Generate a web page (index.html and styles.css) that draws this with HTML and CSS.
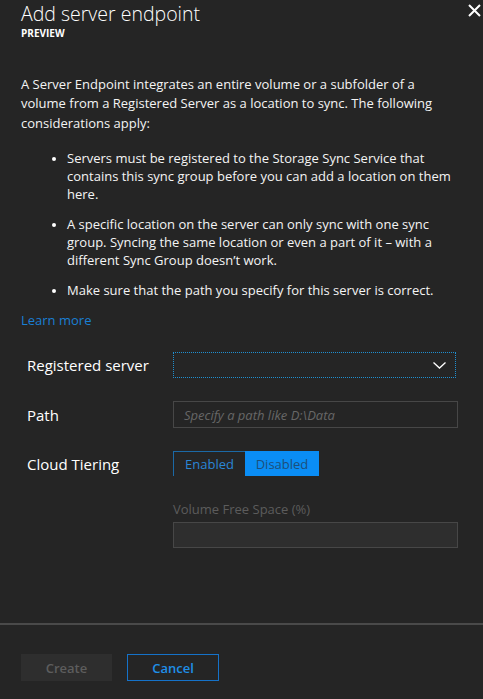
FILE: index.html
```html
<!DOCTYPE html>
<html lang="en">
<head>
<meta charset="utf-8">
<title>Add server endpoint</title>
<link rel="stylesheet" href="styles.css">
</head>
<body>
<div class="blade">
  <header class="blade-header">
    <div class="titles">
      <h1 class="title">Add server endpoint</h1>
      <div class="subtitle">PREVIEW</div>
    </div>
    <button class="close" aria-label="Close">
      <svg width="13" height="13" viewBox="0 0 13 13"><path d="M1 1L12 12M12 1L1 12" stroke="#fff" stroke-width="2" fill="none"/></svg>
    </button>
  </header>

  <main class="blade-body">
    <p class="intro">A Server Endpoint integrates an entire volume or a subfolder of a volume from a Registered Server as a location to sync. The following considerations apply:</p>
    <ul class="points">
      <li>Servers must be registered to the Storage Sync Service that contains this sync group before you can add a location on them here.</li>
      <li>A specific location on the server can only sync with one sync group. Syncing the same location or even a part of it – with a different Sync Group doesn’t work.</li>
      <li>Make sure that the path you specify for this server is correct.</li>
    </ul>
    <a class="learn" href="#">Learn more</a>

    <div class="form">
      <div class="row">
        <label class="label">Registered server</label>
        <div class="dropdown">
          <svg width="13" height="7" viewBox="0 0 13 7"><path d="M0.5 0.5L6.5 6L12.5 0.5" stroke="#fff" stroke-width="1.3" fill="none"/></svg>
        </div>
      </div>
      <div class="row">
        <label class="label">Path</label>
        <div class="input"><span class="placeholder">Specify a path like D:\Data</span></div>
      </div>
      <div class="row">
        <label class="label">Cloud Tiering</label>
        <div class="toggle">
          <span class="seg seg-off">Enabled</span>
          <span class="seg seg-on">Disabled</span>
        </div>
      </div>
      <div class="row row-sub">
        <div class="spacer"></div>
        <div class="field">
          <div class="sublabel">Volume Free Space (%)</div>
          <div class="input input-disabled"></div>
        </div>
      </div>
    </div>
  </main>

  <footer class="blade-footer">
    <button class="btn btn-create">Create</button>
    <button class="btn btn-cancel">Cancel</button>
  </footer>
</div>
</body>
</html>
```

FILE: styles.css
```css
* { box-sizing: border-box; }
html, body { margin: 0; padding: 0; }
body {
  background: #252525;
  color: #ffffff;
  font-family: "Open Sans", "Noto Sans", sans-serif;
}
.blade {
  height: 699px;
  display: flex;
  flex-direction: column;
  background: #252525;
}
.blade-header {
  display: flex;
  justify-content: space-between;
  align-items: flex-start;
  padding: 1.5px 2px 0 21px;
}
.title {
  margin: 0;
  font-size: 19.5px;
  font-weight: 300;
  line-height: 24px;
  color: #ffffff;
}
.subtitle {
  margin-top: 1px;
  font-size: 10px;
  font-weight: 700;
  line-height: 12px;
  color: #ffffff;
}
.close {
  background: none;
  border: 0;
  padding: 0;
  margin-top: 2.5px;
  width: 13px;
  height: 13px;
  display: flex;
}
.blade-body {
  flex: 1;
  padding: 0 21px;
}
.intro {
  margin: 36px 0 0;
  font-size: 13px;
  line-height: 19.5px;
  color: #f4f4f4;
}
.points {
  list-style: none;
  margin: 16px 0 0;
  padding: 0 0 0 31px;
  color: #f4f4f4;
}
.points li {
  display: flex;
  font-size: 13px;
  line-height: 18px;
  margin-bottom: 12px;
}
.points li::before {
  content: "";
  flex: none;
  width: 4px;
  height: 4px;
  border-radius: 50%;
  background: #ffffff;
  margin: 8px 11px 0 0;
}
.learn {
  display: block;
  margin-top: 1px;
  font-size: 13px;
  line-height: 18px;
  color: #1a7fd4;
  text-decoration: none;
}
.form {
  margin-top: 23px;
  padding: 0 4px 0 6px;
  display: flex;
  flex-direction: column;
  gap: 23px;
}
.row {
  display: flex;
  align-items: center;
}
.label {
  width: 146px;
  flex: none;
  font-size: 15px;
  color: #ffffff;
}
.dropdown {
  flex: 1;
  height: 26px;
  margin-right: 2px;
  border: 1px dotted #1f8fd0;
  display: flex;
  align-items: center;
  justify-content: flex-end;
  padding-right: 9px;
}
.input {
  flex: 1;
  height: 27px;
  border: 1px solid #474747;
  display: flex;
  align-items: center;
  padding-left: 10px;
}
.placeholder {
  font-size: 13px;
  font-style: italic;
  color: #676767;
}
.toggle {
  display: flex;
  height: 25px;
}
.seg {
  display: flex;
  align-items: center;
  justify-content: center;
  font-size: 13px;
}
.seg-off {
  width: 72px;
  border-top: 1px solid #1b69a6;
  border-left: 1px solid #1b69a6;
  color: #2a86d6;
}
.seg-on {
  width: 74px;
  background: #0a8df5;
  color: #1d4f7a;
}
.row-sub {
  align-items: flex-start;
  margin-top: 1px;
}
.spacer {
  width: 146px;
  flex: none;
}
.field {
  flex: 1;
  display: flex;
  flex-direction: column;
  gap: 4px;
}
.sublabel {
  font-size: 13px;
  line-height: 18px;
  color: #5c5c5c;
}
.input-disabled {
  flex: none;
  height: 26px;
  background: #2e2e2e;
  border-color: #474747;
}
.blade-footer {
  flex: none;
  height: 76px;
  border-top: 2px solid #4a4a4a;
  display: flex;
  align-items: flex-start;
  gap: 15px;
  padding: 29px 21px 0;
}
.btn {
  height: 27px;
  font-family: "Open Sans", "Noto Sans", sans-serif;
  font-size: 13px;
  font-weight: 600;
  padding: 0;
}
.btn-create {
  width: 91px;
  background: #2e2e2e;
  border: 0;
  color: #5d5d5d;
}
.btn-cancel {
  width: 92px;
  background: transparent;
  border: 1px solid #1572c9;
  color: #1f8fe8;
}
```
